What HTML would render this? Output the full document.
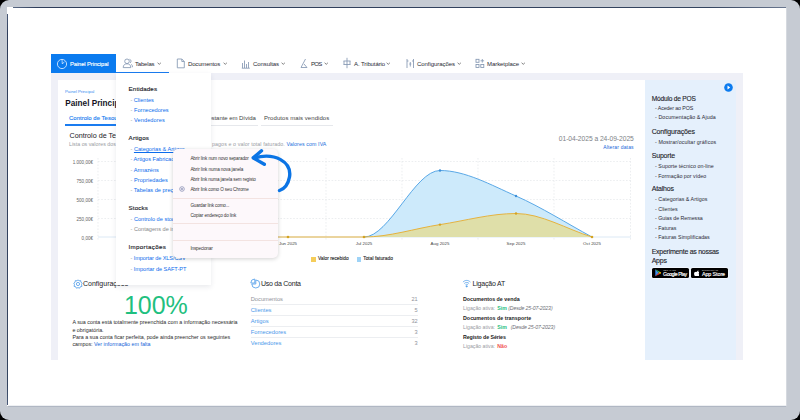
<!DOCTYPE html>
<html><head><meta charset="utf-8">
<style>
*{margin:0;padding:0;box-sizing:border-box}
html,body{width:800px;height:420px;overflow:hidden;background:#000}
body{position:relative;font-family:"Liberation Sans",sans-serif;color:#222}
.a{position:absolute;white-space:nowrap}
#frame{position:absolute;left:0;top:0;width:800px;height:420px;background:#c6cbd3;border-radius:9px}
#screen{position:absolute;left:7px;top:7px;width:779px;height:399px;background:#fff}
.t{position:absolute;white-space:nowrap;line-height:10px;height:10px}
.nav{font-size:6px;color:#2a2a35}
.chev{position:absolute;width:2.4px;height:2.4px;border-right:0.6px solid #666;border-bottom:0.6px solid #666;transform:rotate(45deg)}
.dd{font-size:6.2px;color:#1b1b28}
.lk{color:#0c6cec}
.dash{color:#999}
.cm{font-size:4.6px;color:#333}
.rp{font-size:5.3px;color:#2b2b36}
.rh{font-size:7px;color:#1e1e2b;-webkit-text-stroke:0.12px #1e1e2b}
.med{-webkit-text-stroke:0.14px currentColor}
</style></head><body>
<div id="frame"></div>
<div id="screen"></div>
<div class="a" style="left:13px;top:7px;width:773px;height:1px;background:linear-gradient(90deg,#5a6a85,#2e3d5a 3%,#34445f 90%,#6b7890)"></div>
<div class="a" style="left:7px;top:14px;width:1px;height:391px;background:linear-gradient(180deg,#4a5a78,#2e3d5a 5%,#34445f 95%,#4a5a78)"></div>
<div class="a" style="left:8px;top:404.5px;width:778px;height:1px;background:#eef0f3"></div><div class="a" style="left:8px;top:405.5px;width:778px;height:1px;background:#b0b7c3"></div>
<div class="a" style="left:785.5px;top:8px;width:1px;height:398px;background:#d5d9df"></div>

<!-- app -->
<div class="a" style="left:51px;top:54px;width:692px;height:19px;background:#fff"></div>
<div class="a" style="left:51px;top:73px;width:692px;height:287px;background:#eff0f7"></div>
<div class="a" style="left:58px;top:80px;width:587px;height:280px;background:#fff"></div>
<div class="a" style="left:645px;top:80px;width:91px;height:280px;background:#e5f0fc"></div>

<!-- nav -->
<div class="a" style="left:51px;top:54px;width:65px;height:19px;background:#0b7bef"></div>
<!-- nav items -->
<svg class="a" style="left:56px;top:57.7px" width="12" height="12" viewBox="0 0 12 12"><circle cx="6" cy="6" r="4.6" stroke="#e8f2ff" stroke-width="0.8" fill="none"/><path d="M6 1.4 L6.3 6 L8.6 3.6" stroke="#e8f2ff" stroke-width="0.7" fill="none" stroke-linejoin="round"/></svg>
<div id="n0" class="t nav med" style="left:70px;top:59px;color:#fff;font-size:5.8px;letter-spacing:-0.091px">Painel Principal</div>
<div class="a" style="left:116px;top:72px;width:53px;height:1.2px;background:#1a7cf0"></div>
<svg class="a" style="left:122px;top:58px" width="11" height="11" viewBox="0 0 11 11" fill="none" stroke="#8497b2" stroke-width="0.85"><circle cx="5" cy="3.3" r="2.3"/><path d="M1.2 9.6 C1.2 6.8 3 5.8 5 5.8 C7 5.8 8.8 6.8 8.8 9.6 Z"/><path d="M7.5 1.3 C9 1.5 9.6 3.6 8.3 4.9 M9.3 6.3 C10.2 6.8 10.5 8 10.5 9.2"/></svg>
<div id="n1" class="t nav" style="left:135px;top:59px;letter-spacing:-0.185px">Tabelas</div>
<svg class="a" style="left:157.2px;top:62.3px" width="4.5" height="3" viewBox="0 0 4.5 3"><path d="M0.6 0.8 L2.25 2.3 L3.9 0.8" fill="none" stroke="#4a4a4a" stroke-width="0.7"/></svg>
<svg class="a" style="left:176px;top:58px" width="10" height="11" viewBox="0 0 10 11" fill="none" stroke="#8497b2" stroke-width="0.85"><path d="M1.3 1 H5.8 L8.3 3.5 V9.8 H1.3 Z M5.8 1 V3.5 H8.3"/></svg>
<div id="n2" class="t nav" style="left:188px;top:59px;letter-spacing:-0.169px">Documentos</div>
<svg class="a" style="left:223.2px;top:62.3px" width="4.5" height="3" viewBox="0 0 4.5 3"><path d="M0.6 0.8 L2.25 2.3 L3.9 0.8" fill="none" stroke="#4a4a4a" stroke-width="0.7"/></svg>
<svg class="a" style="left:241px;top:58px" width="10" height="11" viewBox="0 0 10 11" fill="none" stroke="#8497b2" stroke-width="0.85"><path d="M1.5 10 V5 M3.5 10 V2.5 M5.5 10 V6 M7.5 10 V4 M0.8 10.2 H8.8"/></svg>
<div id="n3" class="t nav" style="left:253px;top:59px;letter-spacing:-0.076px">Consultas</div>
<svg class="a" style="left:281.2px;top:62.3px" width="4.5" height="3" viewBox="0 0 4.5 3"><path d="M0.6 0.8 L2.25 2.3 L3.9 0.8" fill="none" stroke="#4a4a4a" stroke-width="0.7"/></svg>
<svg class="a" style="left:299px;top:58px" width="10" height="11" viewBox="0 0 10 11" fill="none" stroke="#8497b2" stroke-width="0.85"><path d="M6.5 1 L2 9.5 H8 L5 6"/></svg>
<div id="n4" class="t nav" style="left:311px;top:59px;letter-spacing:-0.652px">POS</div>
<svg class="a" style="left:324.2px;top:62.3px" width="4.5" height="3" viewBox="0 0 4.5 3"><path d="M0.6 0.8 L2.25 2.3 L3.9 0.8" fill="none" stroke="#4a4a4a" stroke-width="0.7"/></svg>
<svg class="a" style="left:342px;top:57px" width="10" height="12" viewBox="0 0 10 12" fill="none" stroke="#8497b2" stroke-width="0.85"><path d="M5 0.8 V11.2 M1.5 4 H8.5 M1.5 7.5 H8.5 M2 4 V7.5 M8 4 V7.5"/></svg>
<div id="n5" class="t nav" style="left:354px;top:59px;letter-spacing:-0.104px">A. Tributário</div>
<svg class="a" style="left:386.2px;top:62.3px" width="4.5" height="3" viewBox="0 0 4.5 3"><path d="M0.6 0.8 L2.25 2.3 L3.9 0.8" fill="none" stroke="#4a4a4a" stroke-width="0.7"/></svg>
<svg class="a" style="left:406px;top:58px" width="9" height="11" viewBox="0 0 9 11" fill="none" stroke="#8497b2" stroke-width="0.85"><path d="M1 1 V10 M7.5 1 V10 M1 3 H2.5 M6 3 H7.5 M4.3 4 V8.5 M3.3 6 H5.3"/></svg>
<div id="n6" class="t nav" style="left:417px;top:59px;letter-spacing:-0.054px">Configurações</div>
<svg class="a" style="left:457.2px;top:62.3px" width="4.5" height="3" viewBox="0 0 4.5 3"><path d="M0.6 0.8 L2.25 2.3 L3.9 0.8" fill="none" stroke="#4a4a4a" stroke-width="0.7"/></svg>
<svg class="a" style="left:475px;top:58px" width="10" height="11" viewBox="0 0 10 11" fill="none" stroke="#8497b2" stroke-width="0.85"><rect x="1" y="1.3" width="3" height="3"/><rect x="1" y="6.5" width="3" height="3"/><rect x="5.8" y="6.5" width="3" height="3"/><path d="M7.3 1 V4.6 M5.5 2.8 H9.1"/></svg>
<div id="n7" class="t nav" style="left:487px;top:59px;letter-spacing:-0.063px">Marketplace</div>
<svg class="a" style="left:521.2px;top:62.3px" width="4.5" height="3" viewBox="0 0 4.5 3"><path d="M0.6 0.8 L2.25 2.3 L3.9 0.8" fill="none" stroke="#4a4a4a" stroke-width="0.7"/></svg>


<!-- main card -->
<div id="bc" class="t" style="left:65px;top:87px;font-size:4.4px;color:#3b8ef0;letter-spacing:-0.067px">Painel Principal</div>
<div id="ttl" class="t" style="left:65.3px;top:97.7px;font-size:8.2px;font-weight:bold;color:#15151f;line-height:11px;height:11px">Painel Principal</div>
<div id="tb1" class="t med" style="left:69px;top:113.3px;font-size:6px;color:#1a7cf0;-webkit-text-stroke:0.12px #1a7cf0">Controlo de Tesouraria</div>
<div id="tb2" class="t" style="left:140px;top:113.3px;font-size:6px;color:#444">Documentos em Atraso</div>
<div id="tb3" class="t" style="left:189px;top:113.3px;font-size:6px;color:#444;letter-spacing:-0.047px">Valor Restante em Dívida</div>
<div id="tb4" class="t" style="left:264px;top:113.3px;font-size:6px;color:#444;letter-spacing:0.057px">Produtos mais vendidos</div>
<div class="a" style="left:65px;top:124.2px;width:75px;height:1.6px;background:#1a7cf0"></div>
<div class="a" style="left:185px;top:124.6px;width:73px;height:1px;background:#e6e8ec"></div>
<div class="a" style="left:261px;top:124.6px;width:72px;height:1px;background:#e6e8ec"></div>
<div id="sec" class="t" style="left:69.5px;top:130.5px;font-size:7.2px;color:#1b1b26">Controlo de Tesouraria</div>
<div id="sub" class="t" style="left:69px;top:139.4px;font-size:5.3px;color:#9a9ca3">Lista os valores dos documentos emitidos, valores em</div>
<div id="sub2" class="t" style="left:212px;top:139.4px;font-size:5.3px;color:#9a9ca3;letter-spacing:0.091px">pagos e o valor total faturado. <span style="color:#1b6fdc">Valores com IVA</span></div>
<div id="date" class="t" style="right:166.25px;top:134px;font-size:6.7px;color:#7c7f86;letter-spacing:-0.038px">01-04-2025 a 24-09-2025</div>
<div id="alt" class="t" style="right:166.25px;top:142px;font-size:5px;color:#1565d8;letter-spacing:0.165px">Alterar datas</div>

<!-- chart -->
<div class="t" style="right:707px;top:157.9px;font-size:4.55px;color:#666">1.000,00€</div>
<div class="t" style="right:707px;top:177.0px;font-size:4.55px;color:#666">750,00€</div>
<div class="t" style="right:707px;top:195.8px;font-size:4.55px;color:#666">500,00€</div>
<div class="t" style="right:707px;top:214.6px;font-size:4.55px;color:#666">250,00€</div>
<div class="t" style="right:707px;top:233.9px;font-size:4.55px;color:#666">0,00€</div>
<svg class="a" style="left:0;top:0" width="800" height="420" viewBox="0 0 800 420">
<g stroke="#e4e6ea" stroke-width="0.7" stroke-dasharray="1.6 1.6" fill="none">
<path d="M98 161.5 H631 M98 180.5 H631 M98 199.5 H631 M98 218.5 H631"/>
<path d="M98 158 V241 M174 158 V241 M250 158 V241 M326 158 V241 M402 158 V241 M478 158 V241 M554 158 V241 M630.5 158 V241"/>
</g>
<path d="M98 237 H631" stroke="#d3e3f3" stroke-width="0.8"/>
<path d="M364.0,237.0 C389.3,237.0 414.7,170.5 440.0,170.5 C465.3,170.5 490.7,184.9 516.0,196.0 C541.3,207.1 566.7,223.3 592.0,237.0 Z" fill="#cdeafb"/>
<path d="M364.0,237.0 C389.3,237.0 414.7,170.5 440.0,170.5 C465.3,170.5 490.7,184.9 516.0,196.0 C541.3,207.1 566.7,223.3 592.0,237.0" fill="none" stroke="#4a9fe3" stroke-width="0.9"/>
<path d="M364.0,237.0 C389.3,237.0 414.7,228.5 440.0,224.6 C465.3,220.7 490.7,213.5 516.0,213.5 C541.3,213.5 566.7,229.2 592.0,237.0 Z" fill="#dfdfa9"/>
<path d="M136.0,237.0 H364 C389.3,237.0 414.7,228.5 440.0,224.6 C465.3,220.7 490.7,213.5 516.0,213.5 C541.3,213.5 566.7,229.2 592.0,237.0" fill="none" stroke="#e6ad2e" stroke-width="0.9"/>
<g fill="#d3a323"><circle cx="136" cy="237" r="1.3"/><circle cx="212" cy="237" r="1.3"/><circle cx="288" cy="237" r="1.3"/><circle cx="364" cy="237" r="1.3"/><circle cx="440" cy="224.6" r="1.2"/><circle cx="516" cy="213.5" r="1.2"/><circle cx="592" cy="237" r="1.3"/></g>
<g fill="#3d8fd8"><circle cx="440" cy="170.5" r="1.2"/><circle cx="516" cy="196" r="1.2"/></g>
</svg>
<div class="t" style="left:116px;top:239.3px;width:40px;text-align:center;font-size:4.4px;color:#444">Apr 2025</div>
<div class="t" style="left:192px;top:239.3px;width:40px;text-align:center;font-size:4.4px;color:#444">May 2025</div>
<div class="t" style="left:268px;top:239.3px;width:40px;text-align:center;font-size:4.4px;color:#444">Jun 2025</div>
<div class="t" style="left:344px;top:239.3px;width:40px;text-align:center;font-size:4.4px;color:#444">Jul 2025</div>
<div class="t" style="left:420px;top:239.3px;width:40px;text-align:center;font-size:4.4px;color:#444">Aug 2025</div>
<div class="t" style="left:496px;top:239.3px;width:40px;text-align:center;font-size:4.4px;color:#444">Sep 2025</div>
<div class="t" style="left:572px;top:239.3px;width:40px;text-align:center;font-size:4.4px;color:#444">Oct 2025</div>
<div class="a" style="left:311.3px;top:256.8px;width:4.8px;height:4.8px;background:#f5cd5a"></div>
<div id="lg1" class="t med" style="left:318px;top:254px;font-size:4.8px;color:#333;letter-spacing:0.001px">Valor recebido</div>
<div class="a" style="left:356.7px;top:256.8px;width:4.8px;height:4.8px;background:#9ed3f7"></div>
<div id="lg2" class="t med" style="left:363.2px;top:254px;font-size:4.8px;color:#333;letter-spacing:0.045px">Total faturado</div>

<!-- bottom sections -->
<svg class="a" style="left:72.5px;top:278.6px" width="10" height="10" viewBox="0 0 10 10" fill="none" stroke="#4b9be8" stroke-width="0.8"><circle cx="5" cy="5" r="1.6"/><path d="M5 0.8 L6 1.9 L7.7 1.6 L7.9 3.2 L9.2 4.2 L8.5 5.7 L9 7.3 L7.4 7.7 L6.6 9.2 L5 8.6 L3.4 9.2 L2.6 7.7 L1 7.3 L1.5 5.7 L0.8 4.2 L2.1 3.2 L2.3 1.6 L4 1.9 Z"/></svg>
<div id="cfg" class="t" style="left:83px;top:279px;font-size:7px;color:#1b1b26">Configurações</div>
<div id="pct" class="t" style="left:124px;top:292px;font-size:25px;line-height:26px;height:26px;color:#1fc07f;letter-spacing:-0.061px">100%</div>
<div id="par" class="t" style="left:72.4px;top:318.9px;font-size:5.35px;line-height:7.2px;height:7.2px;color:#2a2a2a">A sua conta está totalmente preenchida com a informação necessária</div>
<div class="t" style="left:72.4px;top:326.7px;font-size:5.35px;line-height:7.2px;height:7.2px;color:#2a2a2a">e obrigatória.</div>
<div class="t" style="left:72.4px;top:334px;font-size:5.35px;line-height:7.2px;height:7.2px;color:#2a2a2a">Para a sua conta ficar perfeita, pode ainda preencher os seguintes</div>
<div class="t" style="left:72.4px;top:340.5px;font-size:5.35px;line-height:7.2px;height:7.2px;color:#2a2a2a">campos: <span style="color:#1565d8">Ver informação em falta</span></div>

<svg class="a" style="left:249.5px;top:278px" width="11" height="11" viewBox="0 0 11 11" fill="none" stroke="#4b9be8" stroke-width="0.8"><path d="M5.8 2 A4 4 0 1 1 1.8 6 L5.8 6 Z"/><path d="M4.8 1 A4 4 0 0 0 0.8 5 L4.8 5 Z"/></svg>
<div id="uso" class="t" style="left:261px;top:279px;font-size:7px;color:#1b1b26;letter-spacing:-0.259px">Uso da Conta</div>
<div class="t" style="left:250.7px;top:294px;font-size:5.75px;color:#8f929a">Documentos</div><div class="t" style="right:382.3px;top:294px;font-size:5.6px;color:#8f929a">21</div>
<div class="t" style="left:250.7px;top:304.9px;font-size:5.75px;color:#4a97ea">Clientes</div><div class="t" style="right:382.3px;top:304.9px;font-size:5.6px;color:#8f929a">5</div>
<div class="t" style="left:250.7px;top:316px;font-size:5.75px;color:#4a97ea">Artigos</div><div class="t" style="right:382.3px;top:316px;font-size:5.6px;color:#8f929a">32</div>
<div class="t" style="left:250.7px;top:327.1px;font-size:5.75px;color:#4a97ea">Fornecedores</div><div class="t" style="right:382.3px;top:327.1px;font-size:5.6px;color:#8f929a">3</div>
<div class="t" style="left:250.7px;top:338.2px;font-size:5.75px;color:#4a97ea">Vendedores</div><div class="t" style="right:382.3px;top:338.2px;font-size:5.6px;color:#8f929a">3</div>
<div class="a" style="left:250.7px;top:304px;width:167px;height:0.7px;background:#eceef1"></div>
<div class="a" style="left:250.7px;top:314.8px;width:167px;height:0.7px;background:#eceef1"></div>
<div class="a" style="left:250.7px;top:326.2px;width:167px;height:0.7px;background:#eceef1"></div>
<div class="a" style="left:250.7px;top:337.4px;width:167px;height:0.7px;background:#eceef1"></div>

<svg class="a" style="left:462.3px;top:278.8px" width="9.4" height="9.4" viewBox="0 0 10 10" fill="none" stroke="#4b9be8" stroke-width="0.8"><path d="M1 3.3 C3.5 0.9 6.5 0.9 9 3.3 M2.4 4.8 C4 3.3 6 3.3 7.6 4.8 M3.7 6.2 C4.5 5.5 5.5 5.5 6.3 6.2"/><circle cx="5" cy="7.8" r="0.7" fill="#4b9be8"/></svg>
<div id="lig" class="t" style="left:472.6px;top:279px;font-size:7px;color:#1b1b26;letter-spacing:-0.211px">Ligação AT</div>
<div id="dv" class="t" style="left:463px;top:294px;font-size:5.3px;font-weight:bold;color:#222;letter-spacing:0.004px">Documentos de venda</div>
<div class="t" style="left:463px;top:302.8px;font-size:5.2px;color:#9a9ca3">Ligação ativa: <b style="color:#1fc07f;margin-left:0.8px">Sim</b> <i style="color:#6f7178;letter-spacing:-0.12px">(Desde 25-07-2023)</i></div>
<div id="dt" class="t" style="left:463px;top:313px;font-size:5.3px;font-weight:bold;color:#222;letter-spacing:0.033px">Documentos de transporte</div>
<div class="t" style="left:463px;top:322px;font-size:5.2px;color:#9a9ca3">Ligação ativa: <b style="color:#1fc07f;margin-left:0.8px">Sim</b> <i style="color:#6f7178;letter-spacing:-0.12px;margin-left:2.5px">(Desde 25-07-2023)</i></div>
<div id="rs" class="t" style="left:463px;top:332.2px;font-size:5.3px;font-weight:bold;color:#222;letter-spacing:-0.098px">Registo de Séries</div>
<div class="t" style="left:463px;top:341.3px;font-size:5.2px;color:#9a9ca3">Ligação ativa: <b style="color:#f0524f;margin-left:0.8px">Não</b></div>

<!-- right panel -->
<svg class="a" style="left:723.5px;top:83px" width="9" height="9" viewBox="0 0 9 9"><circle cx="4.5" cy="4.5" r="4.3" fill="#0b7bef"/><path d="M3.5 2.6 L6.2 4.5 L3.5 6.4 Z" fill="#fff"/></svg>
<div id="r1" class="t rh" style="left:651.7px;top:93.8px;font-size:6.6px;letter-spacing:-0.197px">Módulo de POS</div>
<div id="r2" class="t rp" style="left:655px;top:103.3px;letter-spacing:-0.111px">- Aceder ao POS</div>
<div id="r3" class="t rp" style="left:655px;top:112.4px;letter-spacing:0.100px">- Documentação &amp; Ajuda</div>
<div id="r4" class="t rh" style="left:651.7px;top:127.1px;letter-spacing:-0.142px">Configurações</div>
<div id="r5" class="t rp" style="left:655px;top:136.7px;letter-spacing:0.100px">- Mostrar/ocultar gráficos</div>
<div id="r6" class="t rh" style="left:651.7px;top:151.2px;letter-spacing:-0.175px">Suporte</div>
<div id="r7" class="t rp" style="left:655px;top:161px;letter-spacing:0.055px">- Suporte técnico on-line</div>
<div id="r8" class="t rp" style="left:655px;top:170.5px;letter-spacing:0.028px">- Formação por vídeo</div>
<div id="r9" class="t rh" style="left:651.7px;top:184.3px;letter-spacing:-0.181px">Atalhos</div>
<div id="r10" class="t rp" style="left:655px;top:194.3px;letter-spacing:0.039px">- Categorias &amp; Artigos</div>
<div id="r11" class="t rp" style="left:655px;top:203.8px;letter-spacing:0.032px">- Clientes</div>
<div id="r12" class="t rp" style="left:655px;top:213.3px;letter-spacing:-0.032px">- Guias de Remessa</div>
<div id="r13" class="t rp" style="left:655px;top:222.9px;letter-spacing:0.033px">- Faturas</div>
<div id="r14" class="t rp" style="left:655px;top:232.4px;letter-spacing:0.040px">- Faturas Simplificadas</div>
<div id="r15" class="t rh" style="left:651.7px;top:246.7px;letter-spacing:-0.269px">Experimente as nossas</div>
<div id="r16" class="t rh" style="left:651.7px;top:255.5px;letter-spacing:-0.240px">Apps</div>
<div class="a" style="left:652.2px;top:267.8px;width:36.8px;height:10.5px;background:#000;border-radius:1.6px;box-shadow:0 0 0 0.7px #f6f9fe"></div>
<svg class="a" style="left:654.6px;top:269.1px" width="6.6" height="7.7" viewBox="0 0 7 8"><path d="M0.3 0.3 L4 4 L0.3 7.7 Z" fill="#3d8ef0"/><path d="M0.3 0.3 L5.2 2.8 L4 4 Z" fill="#34c35a"/><path d="M0.3 7.7 L5.2 5.2 L4 4 Z" fill="#ea4335"/><path d="M5.2 2.8 L6.8 4 L5.2 5.2 L4 4 Z" fill="#fbbc04"/></svg>
<div id="gp1" class="t" style="left:663.2px;top:267.8px;font-size:2.2px;color:#ddd;line-height:5px;height:5px;letter-spacing:0.214px">GET IT ON</div>
<div id="gp2" class="t" style="left:663.1px;top:269.6px;font-size:5.2px;color:#fff;line-height:9px;height:9px;-webkit-text-stroke:0.15px #fff;letter-spacing:-0.438px">Google Play</div>
<div class="a" style="left:691.1px;top:267.8px;width:36.5px;height:10.5px;background:#000;border-radius:1.6px;box-shadow:0 0 0 0.7px #f6f9fe"></div>
<svg class="a" style="left:693.7px;top:269.5px" width="5.8" height="6.8" viewBox="0 0 5 6"><path d="M2.5 1.4 C3 0.6 3.6 0.3 3.8 0.2 C3.9 0.9 3.4 1.5 2.5 1.4 Z M2.5 1.7 C3.4 1.2 4.3 1.4 4.7 2 C4 2.5 3.9 3.8 4.8 4.3 C4.5 5.1 4 5.8 3.4 5.8 C3 5.8 2.9 5.6 2.4 5.6 C1.9 5.6 1.7 5.8 1.3 5.8 C0.6 5.6 0 4.3 0 3.2 C0 1.8 1.4 1.2 2.5 1.7 Z" fill="#fff"/></svg>
<div id="as1" class="t" style="left:702px;top:267.8px;font-size:2.2px;color:#ddd;line-height:5px;height:5px;letter-spacing:0.031px">Descarregue na</div>
<div id="as2" class="t" style="left:701.9px;top:269.6px;font-size:5.4px;color:#fff;line-height:9px;height:9px;-webkit-text-stroke:0.15px #fff;letter-spacing:-0.097px">App Store</div>

<!-- dropdown -->
<div class="a" style="left:116px;top:73px;width:95px;height:212px;background:#fff;box-shadow:0 2px 5px rgba(40,50,80,0.10)"></div>
<div id="d1" class="t dd med" style="left:128.6px;top:83.6px;letter-spacing:0.107px">Entidades</div>
<div id="d2" class="t dd" style="left:130.5px;top:95px;font-size:5.6px;letter-spacing:-0.034px"><span class="dash">- </span><span class="lk">Clientes</span></div>
<div id="d3" class="t dd" style="left:130.5px;top:105.3px;font-size:5.6px;letter-spacing:0.018px"><span class="dash">- </span><span class="lk">Fornecedores</span></div>
<div id="d4" class="t dd" style="left:130.5px;top:115px;font-size:5.6px;letter-spacing:0.083px"><span class="dash">- </span><span class="lk">Vendedores</span></div>
<div id="d5" class="t dd med" style="left:128.6px;top:133.4px;letter-spacing:0.185px">Artigos</div>
<div id="d6" class="t dd" style="left:130.5px;top:144.1px;font-size:5.6px"><span class="dash">- </span><span class="lk" style="text-decoration:underline">Categorias &amp; Artigos</span></div>
<div id="d7" class="t dd" style="left:130.5px;top:154.3px;font-size:5.6px"><span class="dash">- </span><span class="lk">Artigos Fabricados</span></div>
<div id="d8" class="t dd" style="left:130.5px;top:164.6px;font-size:5.6px;letter-spacing:0.011px"><span class="dash">- </span><span class="lk">Armazéns</span></div>
<div id="d9" class="t dd" style="left:130.5px;top:174.8px;font-size:5.6px;letter-spacing:0.042px"><span class="dash">- </span><span class="lk">Propriedades</span></div>
<div id="d10" class="t dd" style="left:130.5px;top:184.6px;font-size:5.6px"><span class="dash">- </span><span class="lk">Tabelas de preços</span></div>
<div id="d11" class="t dd med" style="left:128.6px;top:203.1px;letter-spacing:0.139px">Stocks</div>
<div id="d12" class="t dd" style="left:130.5px;top:213.8px;font-size:5.6px"><span class="dash">- </span><span class="lk">Controlo de stock</span></div>
<div id="d13" class="t dd" style="left:130.5px;top:224.4px;font-size:5.6px;color:#888"><span class="dash">- </span>Contagens de inventário</div>
<div id="d14" class="t dd med" style="left:128.6px;top:242px;letter-spacing:0.312px">Importações</div>
<div id="d15" class="t dd" style="left:130.5px;top:253.3px;font-size:5.6px;letter-spacing:-0.101px"><span class="dash">- </span><span class="lk">Importar de XLS/CSV</span></div>
<div id="d16" class="t dd" style="left:130.5px;top:263.5px;font-size:5.6px;letter-spacing:-0.037px"><span class="dash">- </span><span class="lk">Importar de SAFT-PT</span></div>

<!-- context menu -->
<div class="a" style="left:173px;top:148.5px;width:105px;height:109px;background:#fdf8fb;border-radius:5px;box-shadow:0 1px 4px rgba(0,0,0,0.18)"></div>
<div id="c1" class="t cm" style="left:190.4px;top:154.2px;letter-spacing:-0.101px">Abrir link num novo separador</div>
<div id="c2" class="t cm" style="left:190.4px;top:164.9px;letter-spacing:-0.095px">Abrir link numa nova janela</div>
<div id="c3" class="t cm" style="left:190.4px;top:174.5px;letter-spacing:-0.113px">Abrir link numa janela sem registo</div>
<svg class="a" style="left:179px;top:186.3px" width="6" height="6" viewBox="0 0 6 6"><circle cx="3" cy="3" r="2.3" fill="none" stroke="#8a90b5" stroke-width="0.8"/><circle cx="3" cy="3" r="0.9" fill="#8a90b5"/></svg>
<div id="c4" class="t cm" style="left:190.4px;top:184.9px;letter-spacing:-0.114px">Abrir link como O seu Chrome</div>
<div class="a" style="left:173px;top:197.6px;width:105px;height:0.7px;background:#f3e3e1"></div>
<div id="c5" class="t cm" style="left:190.4px;top:201.2px;letter-spacing:-0.126px">Guardar link como...</div>
<div id="c6" class="t cm" style="left:190.4px;top:211.0px;letter-spacing:-0.116px">Copiar endereço do link</div>
<div class="a" style="left:173px;top:223px;width:105px;height:0.7px;background:#f3e3e1"></div>
<div class="a" style="left:173px;top:239.5px;width:105px;height:0.7px;background:#f3e3e1"></div>
<div id="c7" class="t cm" style="left:190.4px;top:244.1px;letter-spacing:-0.141px">Inspecionar</div>

<!-- arrow -->
<svg class="a" style="left:0;top:0" width="800" height="420" viewBox="0 0 800 420">
<path d="M254 158 C275 152 292 162 289.5 177 C288 185 284 189 279.5 190.5" fill="none" stroke="#0b74e5" stroke-width="3.4" stroke-linecap="round"/>
<path d="M261.5 150.8 L253.2 157.9 L264.3 164.3" fill="none" stroke="#0b74e5" stroke-width="3.4" stroke-linecap="round" stroke-linejoin="round"/>
</svg>

</body></html>
